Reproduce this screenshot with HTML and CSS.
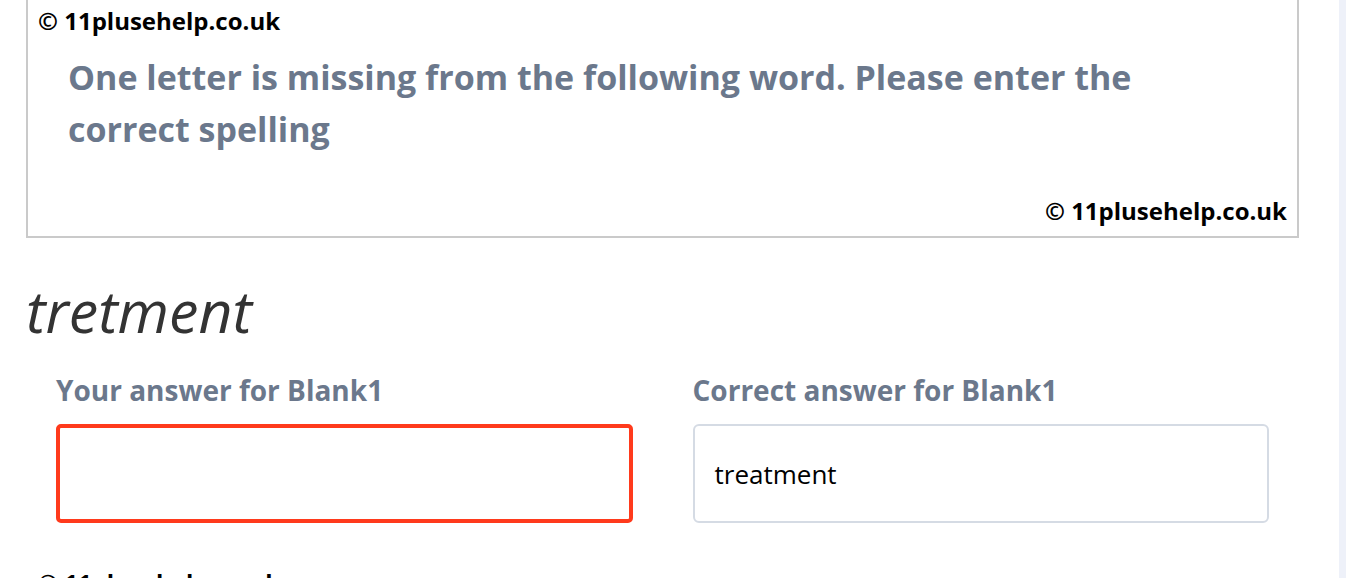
FILE: index.html
```html
<!DOCTYPE html>
<html lang="en">
<head>
<meta charset="utf-8">
<title>Spelling question</title>
<link rel="stylesheet" href="styles.css">
</head>
<body>
<div class="page">
  <main class="content">
    <section class="qbox">
      <div class="copy">© 11plusehelp.co.uk</div>
      <p class="question">One letter is missing from the following word. Please enter the correct spelling</p>
      <div class="copy copy-right">© 11plusehelp.co.uk</div>
    </section>
    <h2 class="word">tretment</h2>
    <div class="answers">
      <div class="answer-col">
        <label class="answer-label">Your answer for Blank1</label>
        <div class="answer-box wrong"></div>
      </div>
      <div class="answer-col">
        <label class="answer-label">Correct answer for Blank1</label>
        <div class="answer-box">treatment</div>
      </div>
    </div>
    <div class="copy copy-next">© 11plusehelp.co.uk</div>
  </main>
  <aside class="side"></aside>
</div>
</body>
</html>
```
FILE: styles.css
```css
* { box-sizing: border-box; }
html, body { margin: 0; padding: 0; }
body {
  font-family: "Open Sans", "Liberation Sans", sans-serif;
  background: #ffffff;
  height: 578px;
  overflow: hidden;
}
.page {
  display: flex;
  height: 578px;
}
.content {
  width: 1339px;
  padding: 0 40px 0 26px;
  background: #ffffff;
}
.side {
  flex: 1;
  background: #eef1f9;
}
.qbox {
  margin-top: -2px;
  border: 2px solid #cacaca;
  background: #ffffff;
  padding: 4px 10px 9px 10px;
}
.copy {
  font-size: 24px;
  font-weight: 700;
  color: #000;
  line-height: 33px;
}
.copy-right { text-align: right; }
.question {
  margin: 14px 30px 39px 30px;
  padding-right: 60px;
  font-size: 34px;
  font-weight: 700;
  line-height: 52px;
  color: #6b788c;
}
.word {
  margin: 35px 0 0 0;
  font-size: 59px;
  font-style: italic;
  font-weight: 400;
  color: #333333;
  line-height: 75px;
}
.answers {
  display: grid;
  grid-template-columns: 1fr 1fr;
  margin-top: 23px;
}
.answer-col {
  padding: 0 30px;
  display: flex;
  flex-direction: column;
}
.answer-label {
  font-size: 28px;
  font-weight: 700;
  color: #6b788c;
  line-height: 38px;
  margin-bottom: 15px;
}
.answer-box {
  height: 99px;
  border: 2px solid #d5dbe4;
  border-radius: 6px;
  background: #fff;
  padding: 0 20px;
  display: flex;
  align-items: center;
  font-size: 26px;
  color: #000;
}
.answer-box.wrong {
  border: 4px solid #ff3a1c;
  border-radius: 5px;
}
.copy-next {
  margin-top: 43px;
  padding-left: 12px;
}
```
